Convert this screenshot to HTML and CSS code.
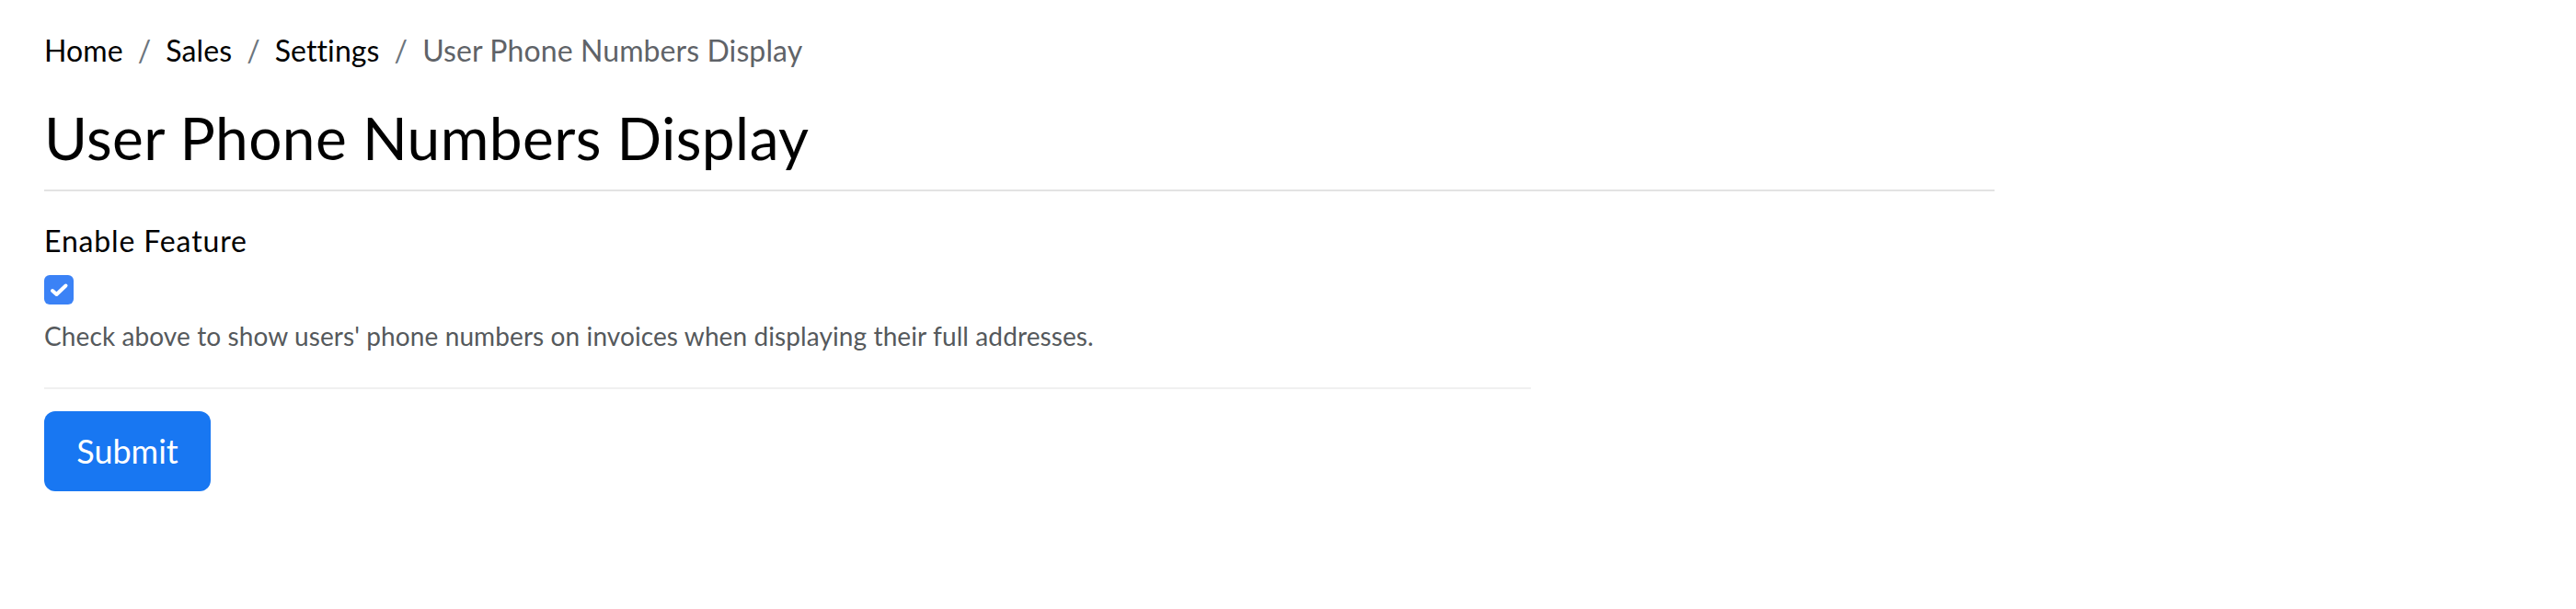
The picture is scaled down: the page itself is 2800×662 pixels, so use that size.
FILE: index.html
```html
<!DOCTYPE html>
<html lang="en">
<head>
<meta charset="utf-8">
<title>User Phone Numbers Display</title>
<link rel="stylesheet" href="styles.css">
</head>
<body>
<div class="page">
  <nav class="crumbs">
    <ol class="crumb-list">
      <li class="crumb"><a href="#">Home</a></li>
      <li class="crumb sep">/</li>
      <li class="crumb"><a href="#">Sales</a></li>
      <li class="crumb sep">/</li>
      <li class="crumb"><a href="#">Settings</a></li>
      <li class="crumb sep">/</li>
      <li class="crumb active">User Phone Numbers Display</li>
    </ol>
  </nav>
  <h1 class="title">User Phone Numbers Display</h1>
  <form class="form">
    <div class="field">
      <label class="label" for="enable">Enable Feature</label>
      <span class="check">
        <svg viewBox="0 0 32 32" width="32" height="32" aria-hidden="true">
          <rect x="0" y="0" width="32" height="32" rx="6" fill="#3b82f6"/>
          <polyline points="9,17 13.5,21 23.5,11.5" fill="none" stroke="#ffffff" stroke-width="4" stroke-linecap="round" stroke-linejoin="round"/>
        </svg>
      </span>
      <p class="help">Check above to show users' phone numbers on invoices when displaying their full addresses.</p>
    </div>
    <div class="actions">
      <button type="button" class="btn">Submit</button>
    </div>
  </form>
</div>
</body>
</html>
```
FILE: styles.css
```css
html, body {
  margin: 0;
  padding: 0;
  background: #ffffff;
}
body {
  font-family: Lato, "Noto Sans", sans-serif;
  font-variant-ligatures: none;
  color: #000000;
  font-size: 32px;
  line-height: 1.5;
}
.page {
  width: 2120px;
  padding: 31px 48px 0 48px;
}
.crumbs {
  margin: 0 0 33px 0;
  letter-spacing: 0.1px;
}
.crumb-list {
  list-style: none;
  display: flex;
  margin: 0;
  padding: 0;
}
.crumb a {
  color: #000000;
  text-decoration: none;
}
.crumb.sep {
  color: #6c757d;
  padding: 0 16px;
}
.crumb.active {
  color: #5f6368;
}
.title {
  margin: 0;
  font-size: 64px;
  font-weight: 400;
  line-height: 1.2;
  letter-spacing: 0.4px;
  padding-bottom: 17px;
  border-bottom: 2px solid #e3e3e3;
}
.form {
  width: 1616px;
  padding-top: 30px;
}
.field {
  display: flex;
  flex-direction: column;
  align-items: flex-start;
  padding-bottom: 35px;
  border-bottom: 2px solid #f0f0f0;
}
.label {
  display: block;
  letter-spacing: 0.85px;
}
.check {
  display: block;
  width: 32px;
  height: 32px;
  margin-top: 13px;
}
.check svg {
  display: block;
}
.help {
  margin: 13px 0 0 0;
  font-size: 28px;
  letter-spacing: 0.1px;
  color: #55595c;
}
.actions {
  padding-top: 24px;
}
.btn {
  font-family: Lato, "Noto Sans", sans-serif;
  font-size: 36px;
  line-height: 1.5;
  color: #ffffff;
  background: #1877f2;
  border: 0;
  border-radius: 12px;
  width: 181px;
  height: 87px;
  padding: 0;
  display: flex;
  align-items: center;
  justify-content: center;
}
```
